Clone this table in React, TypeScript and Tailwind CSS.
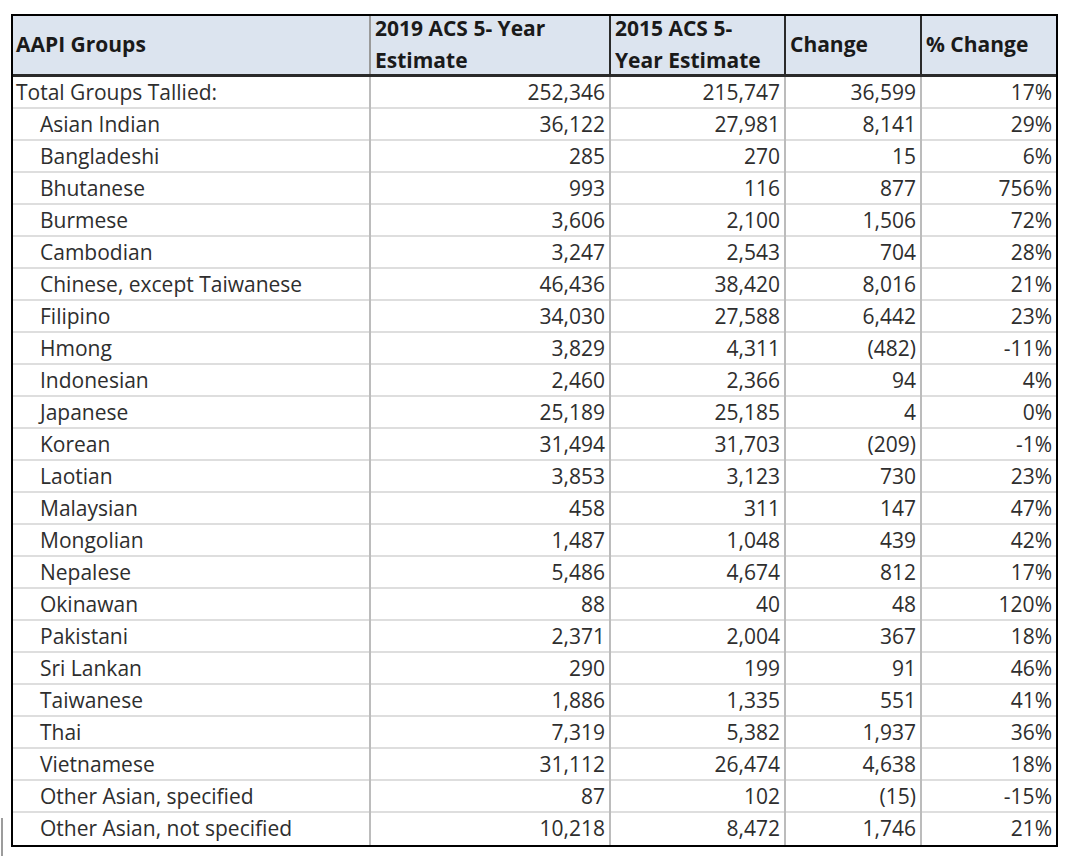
import React from 'react';

// --- DATA ---
const ROWS: [string, string, string, string, string][] = [
    ['Asian Indian', '36,122', '27,981', '8,141', '29%'],
    ['Bangladeshi', '285', '270', '15', '6%'],
    ['Bhutanese', '993', '116', '877', '756%'],
    ['Burmese', '3,606', '2,100', '1,506', '72%'],
    ['Cambodian', '3,247', '2,543', '704', '28%'],
    ['Chinese, except Taiwanese', '46,436', '38,420', '8,016', '21%'],
    ['Filipino', '34,030', '27,588', '6,442', '23%'],
    ['Hmong', '3,829', '4,311', '(482)', '-11%'],
    ['Indonesian', '2,460', '2,366', '94', '4%'],
    ['Japanese', '25,189', '25,185', '4', '0%'],
    ['Korean', '31,494', '31,703', '(209)', '-1%'],
    ['Laotian', '3,853', '3,123', '730', '23%'],
    ['Malaysian', '458', '311', '147', '47%'],
    ['Mongolian', '1,487', '1,048', '439', '42%'],
    ['Nepalese', '5,486', '4,674', '812', '17%'],
    ['Okinawan', '88', '40', '48', '120%'],
    ['Pakistani', '2,371', '2,004', '367', '18%'],
    ['Sri Lankan', '290', '199', '91', '46%'],
    ['Taiwanese', '1,886', '1,335', '551', '41%'],
    ['Thai', '7,319', '5,382', '1,937', '36%'],
    ['Vietnamese', '31,112', '26,474', '4,638', '18%'],
    ['Other Asian, specified', '87', '102', '(15)', '-15%'],
    ['Other Asian, not specified', '10,218', '8,472', '1,746', '21%'],
];

const GRID = 'grid grid-cols-[358px_240px_175px_136px_1fr]';

const Row = ({ cells, indent }: { cells: string[]; indent?: boolean }) => (
    <div className={`${GRID} h-[32px] border-b-2 border-[#dedede] last:border-b-0`}>
        <div className={`flex items-center border-r-2 border-[#bcbcbc] ${indent ? 'pl-[27px]' : 'pl-[3px]'}`}>{cells[0]}</div>
        {cells.slice(1).map((c, i) => (
            <div key={i} className={`flex items-center justify-end pr-[4px] ${i < 3 ? 'border-r-2 border-[#bcbcbc]' : ''}`}>{c}</div>
        ))}
    </div>
);

export default function App() {
    return (
        <div className="relative w-[1074px] h-[862px] bg-white pt-[14px] pl-[11px] text-[21px] text-[#2e2e2e]" style={{ fontFamily: '"Open Sans", Lato, sans-serif' }}>
            <div className="w-[1047px] border-2 border-black">
                {/* header */}
                <div className={`${GRID} grid-rows-[58px] h-[61px] bg-[#dce4ef] border-b-[3px] border-[#2a2a2a] font-bold text-[21px] text-[#1a1a1a] leading-[32px]`}>
                    <div className="flex items-center pl-[3px] pb-[2px] border-r-2 border-[#9a9a9a]">AAPI Groups</div>
                    <div className="flex flex-col justify-center pl-[4px] pb-[2px] border-r-2 border-[#2a2a2a]"><span>2019 ACS 5- Year</span><span>Estimate</span></div>
                    <div className="flex flex-col justify-center pl-[4px] pb-[2px] border-r-2 border-[#2a2a2a]"><span>2015 ACS 5-</span><span>Year Estimate</span></div>
                    <div className="flex items-center pl-[4px] pb-[2px] border-r-2 border-[#2a2a2a]">Change</div>
                    <div className="flex items-center pl-[4px] pb-[2px]">% Change</div>
                </div>
                {/* body */}
                <Row cells={['Total Groups Tallied:', '252,346', '215,747', '36,599', '17%']} />
                {ROWS.map(r => <Row key={r[0]} cells={r} indent />)}
            </div>
            <div className="absolute left-[1px] top-[818px] w-[2px] h-[38px] bg-[#9c9c9c]"></div>
        </div>
    );
}
